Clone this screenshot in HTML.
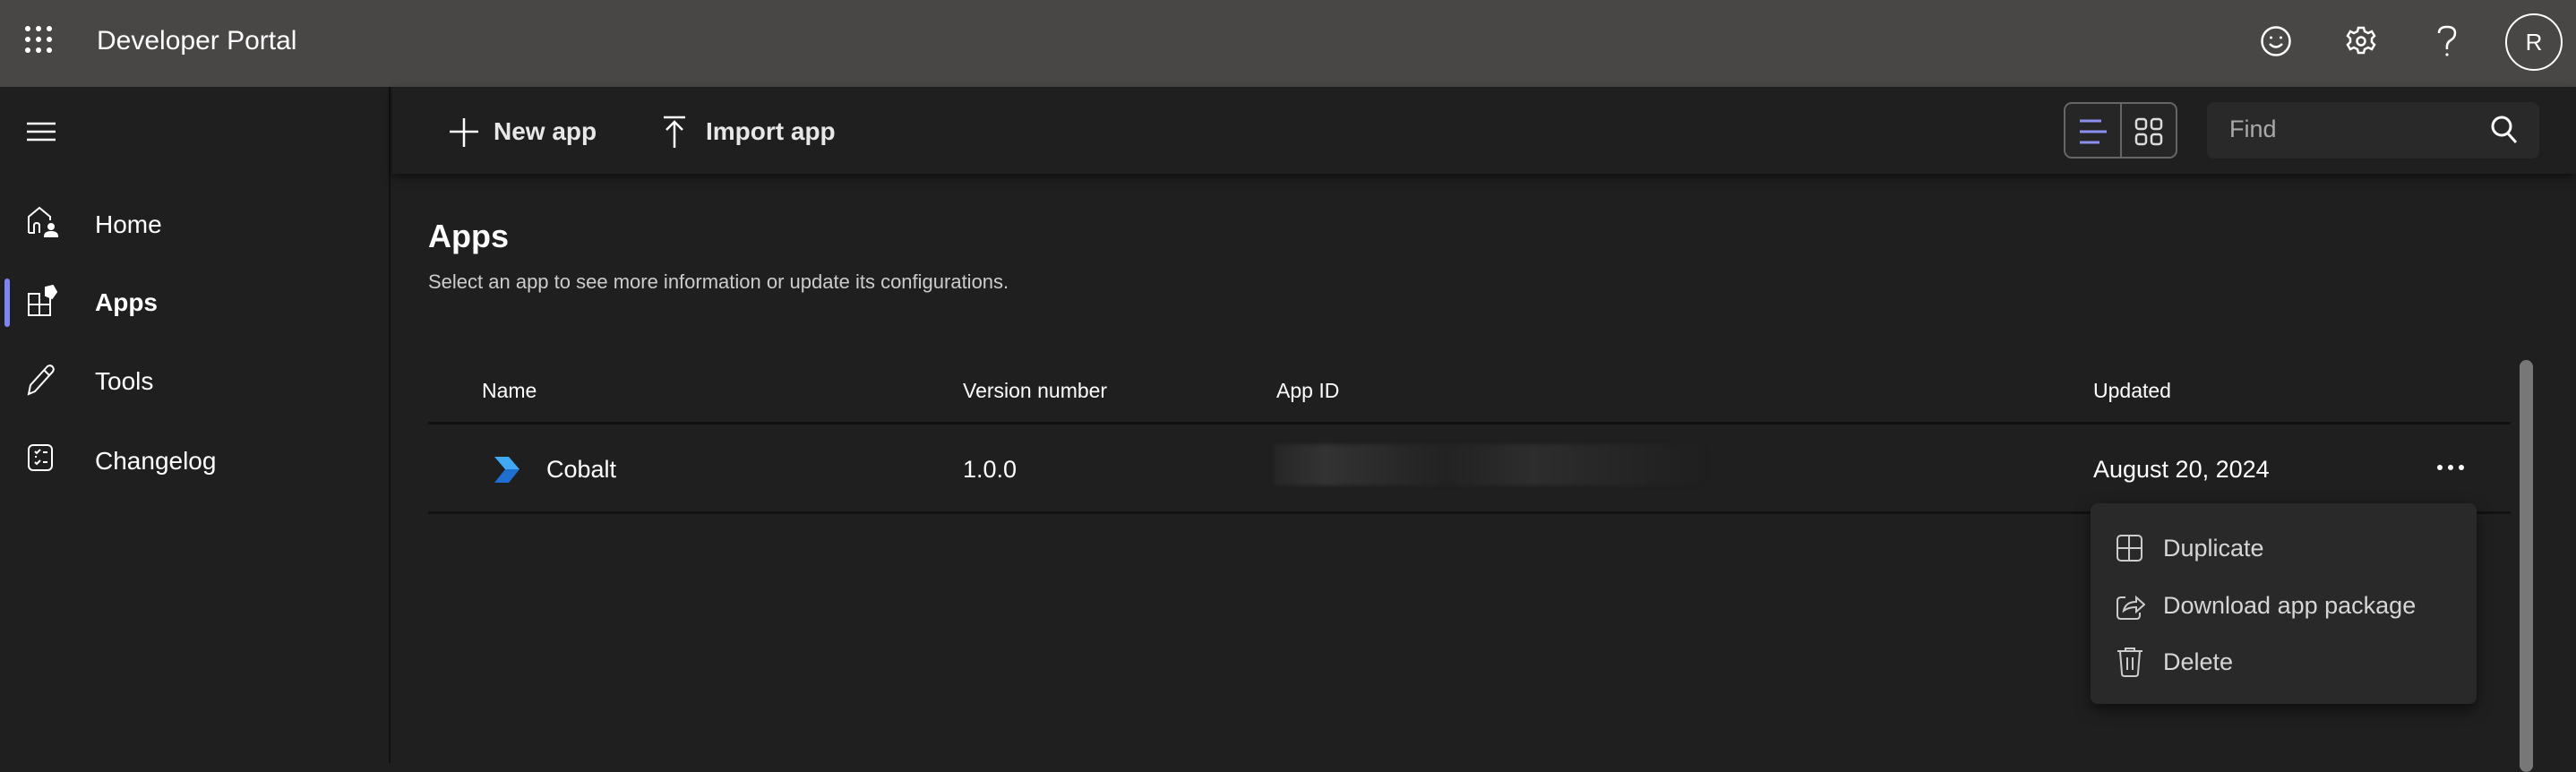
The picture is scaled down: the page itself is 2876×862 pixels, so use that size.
<!DOCTYPE html>
<html><head><meta charset="utf-8"><style>
*{margin:0;padding:0;box-sizing:border-box}
body{width:2876px;height:852px;background:#1f1f1f;font-family:"Liberation Sans",sans-serif;color:#fff;position:relative;overflow:hidden}
.a{position:absolute}
.top{left:0;top:0;width:2876px;height:97px;background:#484746}
.side{left:0;top:97px;width:436px;height:755px;background:#1f1f1f;border-right:2px solid #111}
.nav{font-size:28px;color:#fff;left:106px}
.tb{font-size:28px;font-weight:bold;color:#e8e8e8}
.th{font-size:23px;color:#fff;top:423px}
.mi{font-size:27px;color:#d6d6d6;left:2415px}
</style></head><body>
<div class="a top"></div>
<svg class="a" style="left:28px;top:29px" width="32" height="32" fill="#fff"><g>
<circle cx="3" cy="3" r="3"/><circle cx="15" cy="3" r="3"/><circle cx="27" cy="3" r="3"/>
<circle cx="3" cy="15" r="3"/><circle cx="15" cy="15" r="3"/><circle cx="27" cy="15" r="3"/>
<circle cx="3" cy="27" r="3"/><circle cx="15" cy="27" r="3"/><circle cx="27" cy="27" r="3"/></g></svg>
<div class="a" style="left:108px;top:29px;font-size:30px;color:#fff">Developer Portal</div>
<svg class="a" style="left:2523px;top:28px" width="36" height="36" fill="none" stroke="#fff" stroke-width="2.5"><circle cx="18" cy="18" r="15.5"/><circle cx="12.5" cy="14" r="1.5" fill="#fff" stroke="none"/><circle cx="23.5" cy="14" r="1.5" fill="#fff" stroke="none"/><path d="M11 21q7 7 14 0"/></svg>
<svg class="a" style="left:2618px;top:28px" width="36" height="36" fill="none" stroke="#fff" stroke-width="2.5"><path d="M15 3h6l1 4 4 2 4-2 3 5-3 3v4l3 3-3 5-4-2-4 2-1 4h-6l-1-4-4-2-4 2-3-5 3-3v-4l-3-3 3-5 4 2 4-2z"/><circle cx="18" cy="18" r="4.5"/></svg>
<svg class="a" style="left:2718px;top:27px" width="28" height="38" fill="none" stroke="#fff" stroke-width="2.5"><path d="M5 10q0-7 9-7t9 7q0 5-5 8t-4 10"/><circle cx="14" cy="34" r="1.6" fill="#fff" stroke="none"/></svg>
<div class="a" style="left:2797px;top:15px;width:64px;height:64px;border:2px solid #fff;border-radius:50%;text-align:center;line-height:60px;font-size:26px">R</div>

<div class="a side"></div>
<svg class="a" style="left:30px;top:136px" width="32" height="22" stroke="#fff" stroke-width="2.5"><path d="M0 2h32M0 11h32M0 20h32"/></svg>
<div class="a" style="left:5px;top:311px;width:6px;height:54px;background:#7f85f5;border-radius:3px"></div>
<svg class="a" style="left:30px;top:230px" width="36" height="36" fill="none" stroke="#fff" stroke-width="2"><path d="M2 30V12L14 2 26 12v4"/><path d="M2 30h6V22q0-3 3-3t3 3v8"/><circle cx="27" cy="23" r="3" fill="#fff"/><path d="M20 34q0-5 7-5t7 5z" fill="#fff"/></svg>
<div class="a nav" style="top:235px">Home</div>
<svg class="a" style="left:30px;top:318px" width="36" height="36" fill="none" stroke="#fff" stroke-width="2"><path d="M2 10h12v24H2zM2 22h24v12H14"/><path d="M26 22V14"/><path d="M21 3l8-2 4 7-5 7-7-3z" fill="#fff"/></svg>
<div class="a nav" style="top:322px;font-weight:bold">Apps</div>
<svg class="a" style="left:29px;top:406px" width="36" height="36" fill="none" stroke="#fff" stroke-width="2"><path d="M3 34l2-10L24 3q4-2 6 1t-1 6L10 31z M20 7l6 6"/></svg>
<div class="a nav" style="top:410px">Tools</div>
<svg class="a" style="left:31px;top:496px" width="32" height="32" fill="none" stroke="#fff" stroke-width="2"><rect x="1" y="1" width="26" height="28" rx="5"/><path d="M8 8l2 2 4-4M17 9h5M8 20l2 2 4-4M17 20h5M8 14h2"/></svg>
<div class="a nav" style="top:499px">Changelog</div>

<div class="a" style="left:438px;top:97px;width:2438px;height:97px;background:#1f1f1f;box-shadow:0 4px 10px rgba(0,0,0,.5)"></div>
<svg class="a" style="left:502px;top:130px" width="32" height="34" stroke="#fff" stroke-width="2.5"><path d="M16 2v32M0 17h32"/></svg>
<div class="a tb" style="left:551px;top:131px">New app</div>
<svg class="a" style="left:740px;top:129px" width="26" height="36" fill="none" stroke="#fff" stroke-width="2.5"><path d="M1 2h24M13 36V8M4 16l9-9 9 9"/></svg>
<div class="a tb" style="left:788px;top:131px">Import app</div>
<div class="a" style="left:2304px;top:114px;width:127px;height:63px;border:2px solid #666;border-radius:9px;background:#262626"></div>
<div class="a" style="left:2367px;top:115px;width:2px;height:61px;background:#666"></div>
<svg class="a" style="left:2320px;top:133px" width="32" height="28" stroke="#8b8ff0" stroke-width="3"><path d="M2 2h24M2 14h30M2 26h22"/></svg>
<svg class="a" style="left:2383px;top:131px" width="32" height="32" fill="none" stroke="#ddd" stroke-width="2.5"><rect x="2" y="2" width="11" height="11" rx="3"/><rect x="19" y="2" width="11" height="11" rx="3"/><rect x="2" y="19" width="11" height="11" rx="3"/><rect x="19" y="19" width="11" height="11" rx="3"/></svg>
<div class="a" style="left:2464px;top:114px;width:371px;height:63px;background:#292929;border-radius:8px"></div>
<div class="a" style="left:2489px;top:129px;font-size:27px;color:#aaa">Find</div>
<svg class="a" style="left:2780px;top:128px" width="32" height="34" fill="none" stroke="#fff" stroke-width="3"><circle cx="13" cy="13" r="10"/><path d="M20 21l9 10"/></svg>

<div class="a" style="left:478px;top:243px;font-size:36px;font-weight:bold">Apps</div>
<div class="a" style="left:478px;top:302px;font-size:22px;color:#ccc">Select an app to see more information or update its configurations.</div>
<div class="a th" style="left:538px">Name</div>
<div class="a th" style="left:1075px">Version number</div>
<div class="a th" style="left:1425px">App ID</div>
<div class="a th" style="left:2337px">Updated</div>
<div class="a" style="left:478px;top:471px;width:2325px;height:3px;background:#111"></div>
<div class="a" style="left:478px;top:571px;width:2325px;height:3px;background:#111"></div>
<svg class="a" style="left:552px;top:510px" width="30" height="30"><path d="M0 0h16l12 14H12z" fill="#40a8f5"/><path d="M12 14h16L16 29H0z" fill="#1e6fd0"/></svg>
<div class="a" style="left:610px;top:509px;font-size:27px">Cobalt</div>
<div class="a" style="left:1075px;top:509px;font-size:27px">1.0.0</div>
<div class="a" style="left:1422px;top:496px;width:481px;height:46px;background:linear-gradient(90deg,#262626,#333 12%,#222 40%,#2d2d2d 60%,#222 90%,#1f1f1f);filter:blur(2px)"></div>
<div class="a" style="left:2337px;top:509px;font-size:27px">August 20, 2024</div>
<svg class="a" style="left:2720px;top:517px" width="34" height="10" fill="#fff"><circle cx="4" cy="5" r="3"/><circle cx="16" cy="5" r="3"/><circle cx="28" cy="5" r="3"/></svg>
<div class="a" style="left:2813px;top:402px;width:15px;height:460px;background:#777;border-radius:8px"></div>

<div class="a" style="left:2334px;top:562px;width:431px;height:224px;background:#292929;border-radius:8px;box-shadow:0 6px 16px rgba(0,0,0,.55)"></div>
<svg class="a" style="left:2363px;top:597px" width="30" height="30" fill="none" stroke="#ccc" stroke-width="2"><rect x="1" y="1" width="27" height="28" rx="4"/><path d="M14 1v28M1 15h27"/></svg>
<div class="a mi" style="top:597px">Duplicate</div>
<svg class="a" style="left:2363px;top:660px" width="32" height="32" fill="none" stroke="#ccc" stroke-width="2"><path d="M10 7H5q-4 0-4 4v16q0 4 4 4h17q4 0 4-4v-3"/><path d="M8 22q2-10 14-10V7l9 8-9 8v-5q-9 0-14 4z"/></svg>
<div class="a mi" style="top:661px">Download app package</div>
<svg class="a" style="left:2363px;top:722px" width="30" height="34" fill="none" stroke="#ccc" stroke-width="2"><path d="M1 5h28M10 5V2h10v3M4 5l2 25q0 3 3 3h12q3 0 3-3l2-25M12 12v14M18 12v14"/></svg>
<div class="a mi" style="top:724px">Delete</div>
</body></html>
